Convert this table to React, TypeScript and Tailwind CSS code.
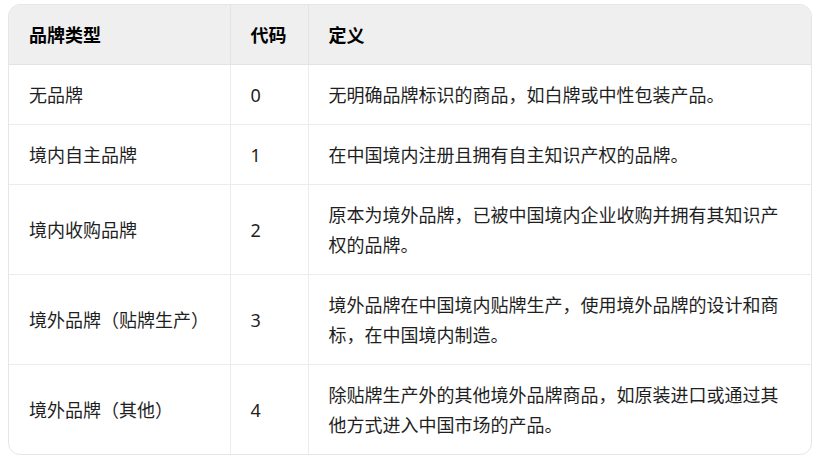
const rows = [
  { type: "无品牌", code: "0", def: "无明确品牌标识的商品，如白牌或中性包装产品。" },
  { type: "境内自主品牌", code: "1", def: "在中国境内注册且拥有自主知识产权的品牌。" },
  { type: "境内收购品牌", code: "2", def: "原本为境外品牌，已被中国境内企业收购并拥有其知识产权的品牌。" },
  { type: "境外品牌（贴牌生产）", code: "3", def: "境外品牌在中国境内贴牌生产，使用境外品牌的设计和商标，在中国境内制造。" },
  { type: "境外品牌（其他）", code: "4", def: "除贴牌生产外的其他境外品牌商品，如原装进口或通过其他方式进入中国市场的产品。" },
];

export default function App() {
  return (
    <div
      className="w-[817px] h-[461px] bg-white pt-1 px-2"
      style={{ fontFamily: '"Noto Sans", "Noto Sans CJK SC", sans-serif' }}
    >
      <div className="w-[804px] rounded-xl border border-[#e6e6e6] overflow-hidden">
        <table className="w-full table-fixed border-collapse text-[18px] leading-[30px] text-[#1f1f1f]">
          <colgroup>
            <col className="w-[221px]" />
            <col className="w-[78px]" />
            <col />
          </colgroup>
          <thead>
            <tr className="bg-[#efefef] text-black font-bold">
              <th className="text-left px-5 py-[14.5px] border-b border-r border-[#e3e3e3]">品牌类型</th>
              <th className="text-left px-5 py-[14.5px] border-b border-r border-[#e3e3e3]">代码</th>
              <th className="text-left px-5 py-[14.5px] border-b border-[#e3e3e3]">定义</th>
            </tr>
          </thead>
          <tbody>
            {rows.map((r, i) => {
              const last = i === rows.length - 1;
              return (
                <tr key={r.code} className={last ? "" : "border-b border-[#ececec]"}>
                  <td className="px-5 py-[14.5px] border-r border-[#ececec] align-middle">{r.type}</td>
                  <td className="px-5 py-[14.5px] border-r border-[#ececec] align-middle">{r.code}</td>
                  <td className="px-5 py-[14.5px] align-middle">{r.def}</td>
                </tr>
              );
            })}
          </tbody>
        </table>
      </div>
    </div>
  );
}
